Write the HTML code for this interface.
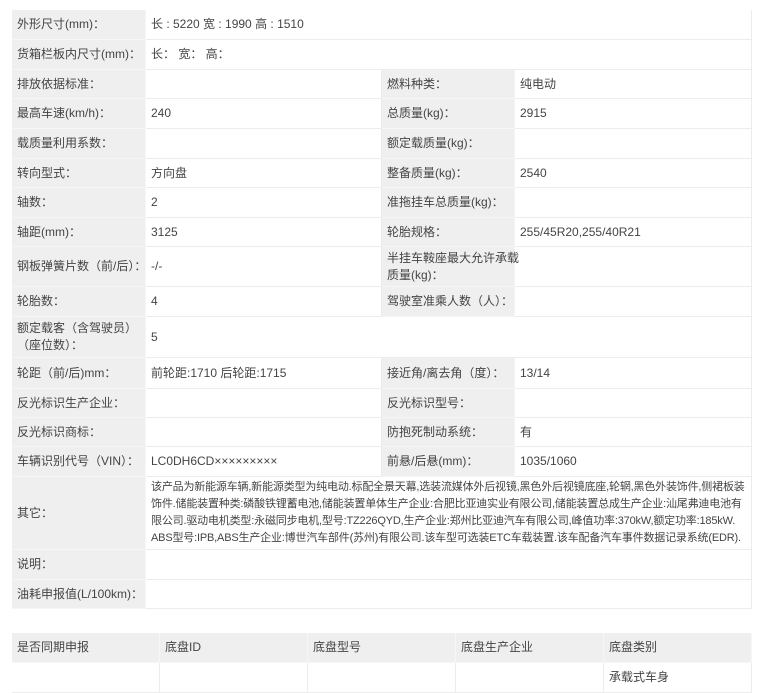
<!DOCTYPE html>
<html><head><meta charset="utf-8"><style>
*{margin:0;padding:0;box-sizing:border-box}
body{width:768px;height:691px;background:#fff;position:relative;overflow:hidden;font-family:"Liberation Sans","Noto Sans CJK SC",sans-serif;font-size:12px;color:#444}
.c{position:absolute;display:flex;align-items:center;padding-left:5px;border-bottom:1px solid #ececec;border-right:1px solid #ececec;line-height:17px;white-space:nowrap}
.l{background:#efefef;border-color:#f6f6f6}
.other{font-size:11px;letter-spacing:-0.18px;line-height:17px;white-space:nowrap}
</style></head><body>
<div id="t"></div>
<script>
var rows=[
[10,40,"外形尺寸(mm)：","长 : 5220 宽 : 1990 高 : 1510"],
[40,70,"货箱栏板内尺寸(mm)：","长： 宽： 高："],
[70,99,"排放依据标准：","","燃料种类：","纯电动"],
[99,129,"最高车速(km/h)：","240","总质量(kg)：","2915"],
[129,159,"载质量利用系数：","","额定载质量(kg)：",""],
[159,188,"转向型式：","方向盘","整备质量(kg)：","2540"],
[188,218,"轴数：","2","准拖挂车总质量(kg)：",""],
[218,247,"轴距(mm)：","3125","轮胎规格：","255/45R20,255/40R21"],
[247,287,"钢板弹簧片数（前/后）：","-/-","半挂车鞍座最大允许承载<br>质量(kg)：",""],
[287,317,"轮胎数：","4","驾驶室准乘人数（人）：",""],
[317,358,"额定载客（含驾驶员）<br>（座位数）：","5"],
[358,389,"轮距（前/后)mm：","前轮距:1710 后轮距:1715","接近角/离去角（度）：","13/14"],
[389,418,"反光标识生产企业：","","反光标识型号：",""],
[418,447,"反光标识商标：","","防抱死制动系统：","有"],
[447,477,"车辆识别代号（VIN）：","LC0DH6CD×××××××××","前悬/后悬(mm)：","1035/1060"],
[477,550,"其它：","<div class='other'>该产品为新能源车辆,新能源类型为纯电动.标配全景天幕,选装流媒体外后视镜,黑色外后视镜底座,轮辋,黑色外装饰件,侧裙板装<br>饰件.储能装置种类:磷酸铁锂蓄电池,储能装置单体生产企业:合肥比亚迪实业有限公司,储能装置总成生产企业:汕尾弗迪电池有<br>限公司.驱动电机类型:永磁同步电机,型号:TZ226QYD,生产企业:郑州比亚迪汽车有限公司,峰值功率:370kW,额定功率:185kW.<br>ABS型号:IPB,ABS生产企业:博世汽车部件(苏州)有限公司.该车型可选装ETC车载装置.该车配备汽车事件数据记录系统(EDR).</div>"],
[550,580,"说明：",""],
[580,609,"油耗申报值(L/100km)：",""]
];
var h="";
function cell(x,y,w,hh,cls,txt){h+='<div class="c '+cls+'" style="left:'+x+'px;top:'+y+'px;width:'+w+'px;height:'+hh+'px">'+txt+'</div>';}
rows.forEach(function(r){var y=r[0],hh=r[1]-r[0];
cell(12,y,134,hh,"l",r[2]);
if(r.length>4){cell(146,y,236,hh,"",r[3]);cell(382,y,133,hh,"l",r[4]);cell(515,y,237,hh,"",r[5]);}
else cell(146,y,606,hh,"",r[3]);});
var cols=[12,160,308,456,604,752],hd=["是否同期申报","底盘ID","底盘型号","底盘生产企业","底盘类别"];
for(var i=0;i<5;i++){cell(cols[i],633,cols[i+1]-cols[i],30,"l",hd[i]);cell(cols[i],663,cols[i+1]-cols[i],30,"",i==4?"承载式车身":"");}
document.getElementById("t").innerHTML=h;
</script>
</body></html>
